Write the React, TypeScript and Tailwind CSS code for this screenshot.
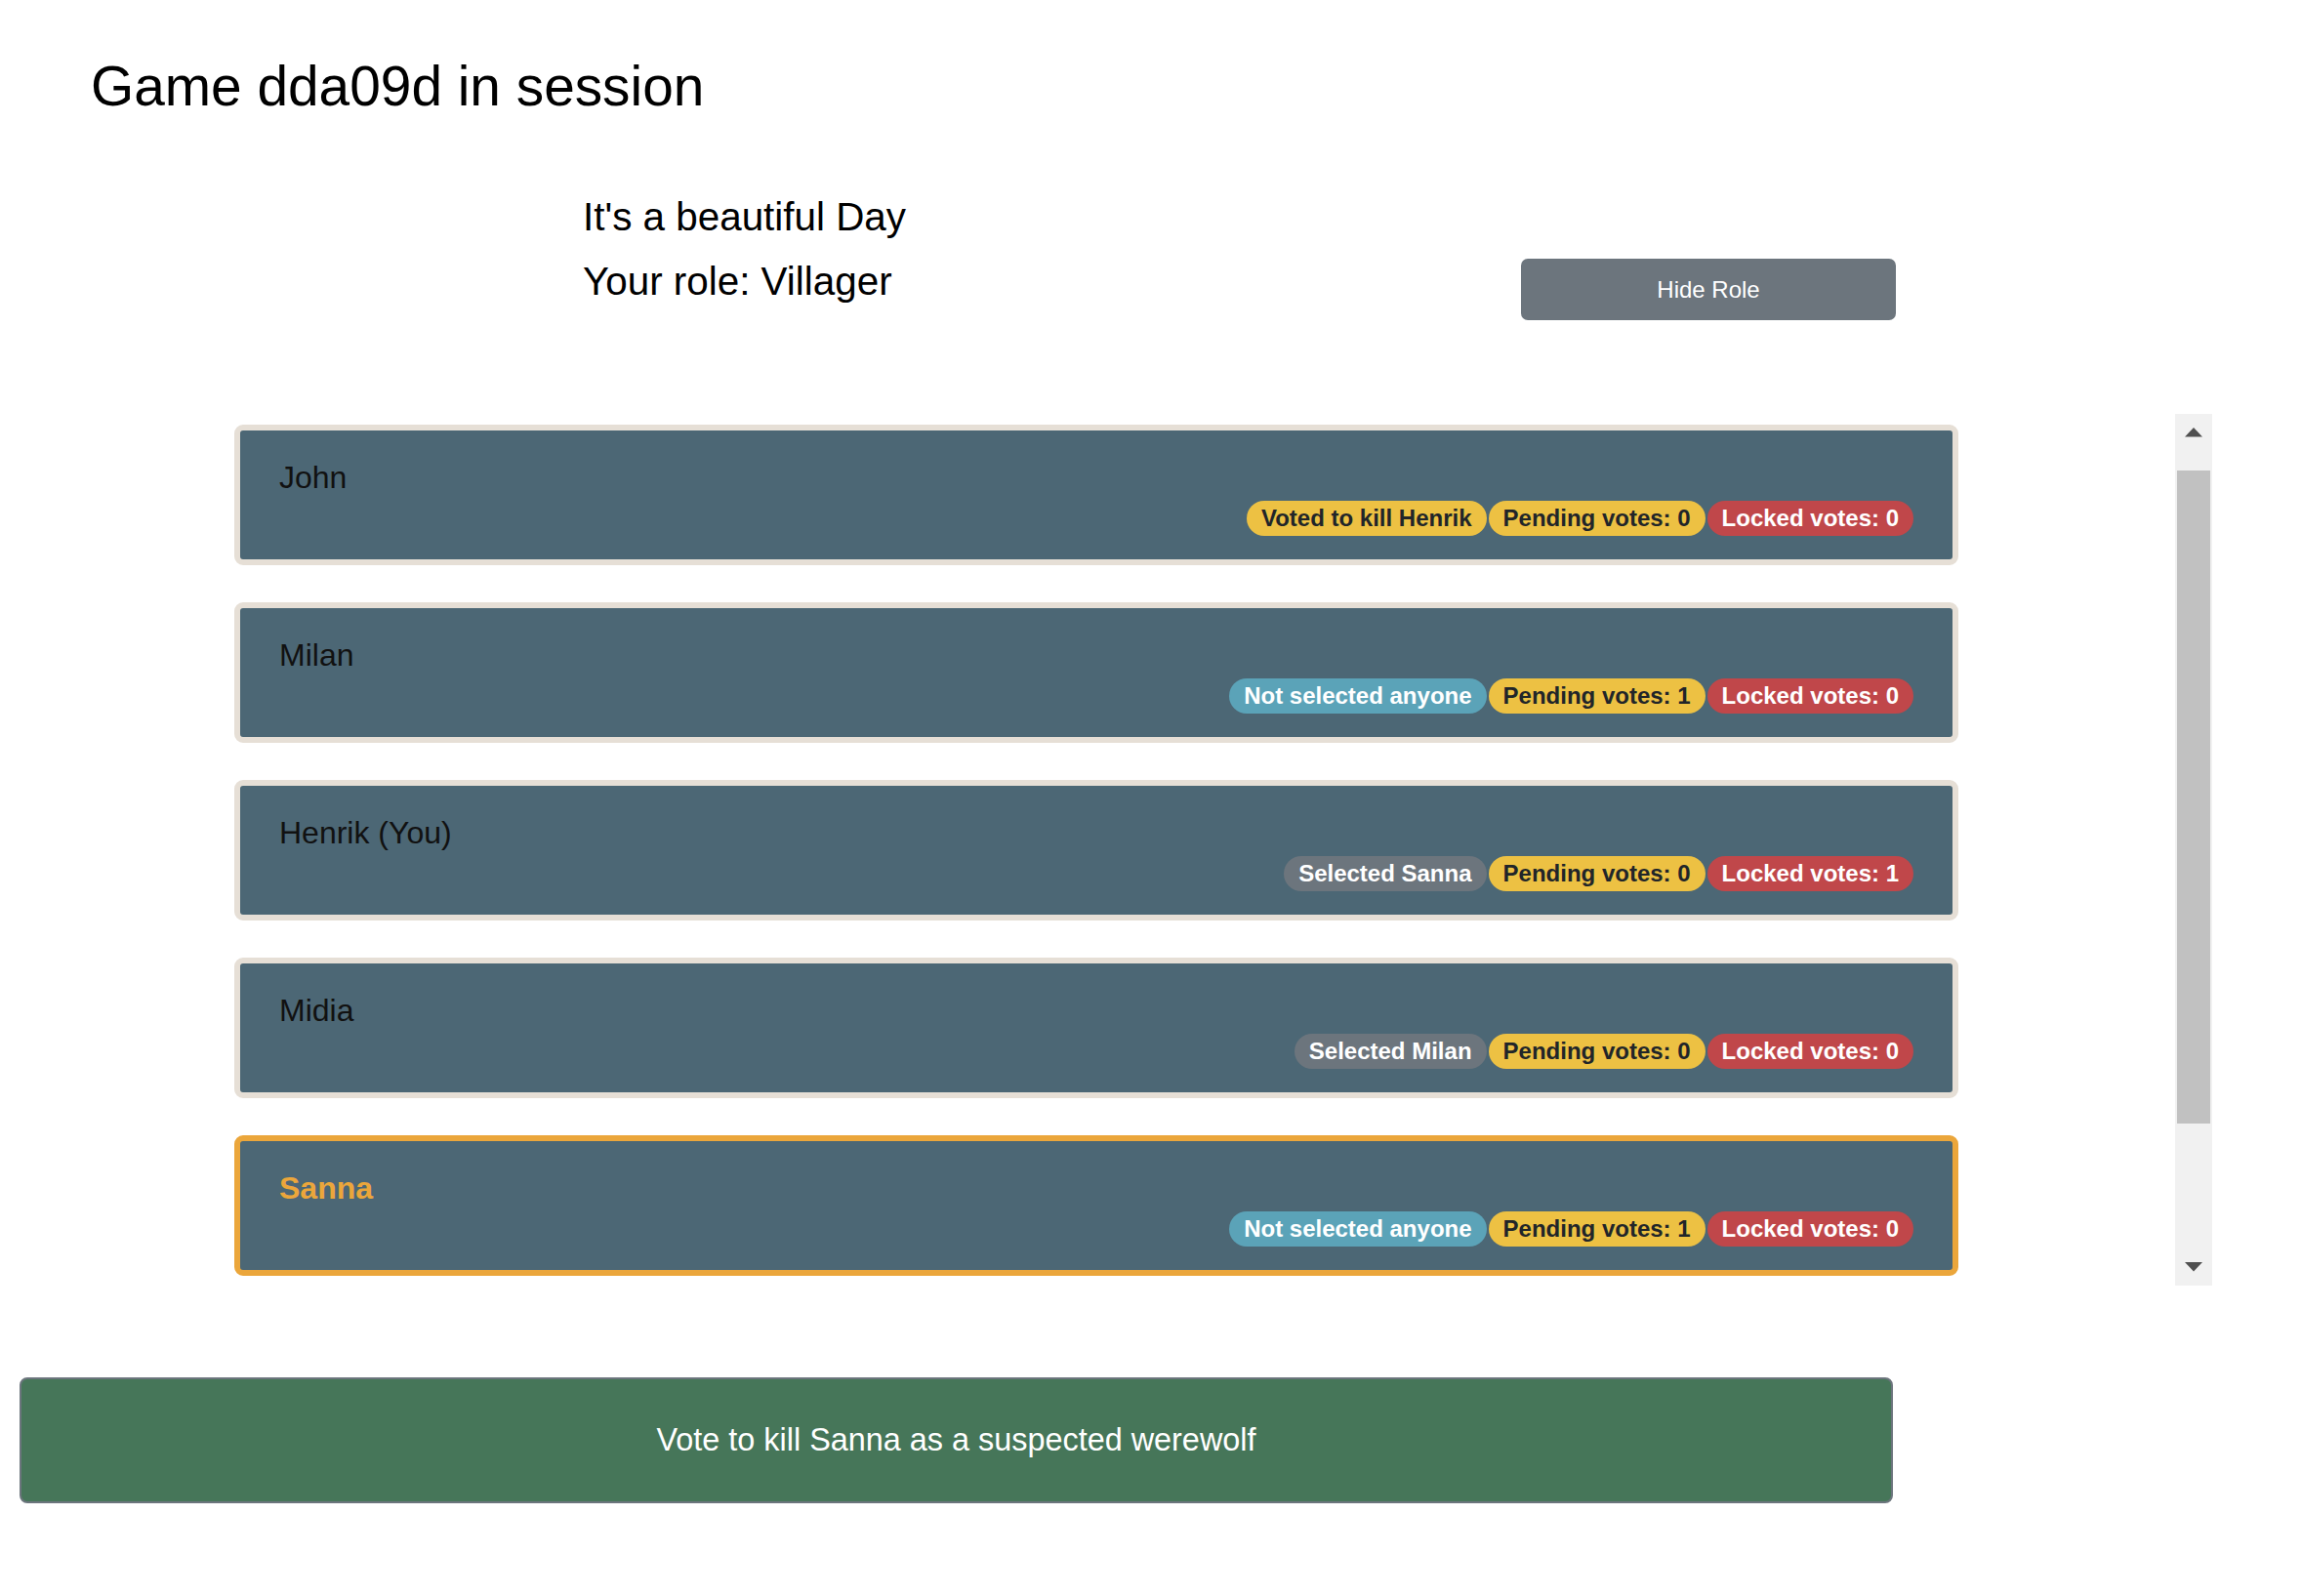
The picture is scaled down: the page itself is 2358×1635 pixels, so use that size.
import React from "react";

type Badge = { text: string; kind: "warning" | "danger" | "info" | "secondary" };
type Player = { name: string; selected?: boolean; badges: Badge[] };

const players: Player[] = [
  {
    name: "John",
    badges: [
      { text: "Voted to kill Henrik", kind: "warning" },
      { text: "Pending votes: 0", kind: "warning" },
      { text: "Locked votes: 0", kind: "danger" },
    ],
  },
  {
    name: "Milan",
    badges: [
      { text: "Not selected anyone", kind: "info" },
      { text: "Pending votes: 1", kind: "warning" },
      { text: "Locked votes: 0", kind: "danger" },
    ],
  },
  {
    name: "Henrik (You)",
    badges: [
      { text: "Selected Sanna", kind: "secondary" },
      { text: "Pending votes: 0", kind: "warning" },
      { text: "Locked votes: 1", kind: "danger" },
    ],
  },
  {
    name: "Midia",
    badges: [
      { text: "Selected Milan", kind: "secondary" },
      { text: "Pending votes: 0", kind: "warning" },
      { text: "Locked votes: 0", kind: "danger" },
    ],
  },
  {
    name: "Sanna",
    selected: true,
    badges: [
      { text: "Not selected anyone", kind: "info" },
      { text: "Pending votes: 1", kind: "warning" },
      { text: "Locked votes: 0", kind: "danger" },
    ],
  },
];

const badgeClass: Record<Badge["kind"], string> = {
  warning: "bg-[#edc143] text-[#212529]",
  danger: "bg-[#c0474a] text-white",
  info: "bg-[#5ba3b8] text-white",
  secondary: "bg-[#6c757d] text-white",
};

function PlayerCard({ p }: { p: Player }) {
  return (
    <div
      className={
        "h-[144px] rounded-[9px] border-[6px] bg-[#4c6775] px-[40px] py-[24px] " +
        (p.selected ? "border-[#eba63b]" : "border-[#e6dfd6]")
      }
    >
      <div
        className={
          "h-[48px] text-[32px] leading-[48px] " +
          (p.selected ? "font-bold text-[#eba63b]" : "text-[#111]")
        }
      >
        {p.name}
      </div>
      <div className="flex h-[36px] justify-end gap-[2px]">
        {p.badges.map((b, i) => (
          <span
            key={i}
            className={
              "flex h-[36px] items-center rounded-full px-[15px] text-[24px] font-bold leading-none " +
              badgeClass[b.kind]
            }
          >
            {b.text}
          </span>
        ))}
      </div>
    </div>
  );
}

function Scrollbar() {
  return (
    <div className="flex h-full w-[38px] flex-col bg-[#f1f1f1]">
      <div className="flex h-[38px] items-center justify-center">
        <svg width="18" height="10" viewBox="0 0 18 10">
          <polygon points="9,0 18,9.5 0,9.5" fill="#505050" />
        </svg>
      </div>
      <div className="flex-1 px-[2px]">
        <div className="mt-[20px] h-[669px] bg-[#c1c1c1]" />
      </div>
      <div className="flex h-[38px] items-center justify-center">
        <svg width="18" height="10" viewBox="0 0 18 10">
          <polygon points="0,0 18,0 9,9.5" fill="#505050" />
        </svg>
      </div>
    </div>
  );
}

export default function App() {
  return (
    <div
      className="min-h-screen w-full bg-white text-[#111]"
      style={{ fontFamily: '"Liberation Sans", Arial, sans-serif' }}
    >
      <h1 className="pl-[93px] pt-[55px] text-[56.8px] font-normal leading-[68px] text-black">
        Game dda09d in session
      </h1>

      <div className="mt-[66px] flex items-start">
        <div className="ml-[597px] w-[961px] text-[40.4px] leading-[66px] text-black">
          <div>It's a beautiful Day</div>
          <div>Your role: Villager</div>
        </div>
        <button className="mt-[76px] h-[63px] w-[384px] rounded-[7px] bg-[#6c757d] text-[24px] text-white">
          Hide Role
        </button>
      </div>

      <div className="mt-[96px] flex h-[893px] w-[2266px]">
        <div className="flex flex-1 flex-col gap-[38px] overflow-hidden pl-[240px] pr-[222px] pt-[11px]">
          {players.map((p) => (
            <PlayerCard key={p.name} p={p} />
          ))}
        </div>
        <Scrollbar />
      </div>

      <div className="mt-[94px] pl-[20px]">
        <button className="flex h-[129px] w-[1919px] items-center justify-center rounded-[8px] border-2 border-[#6c757d] bg-[#467659] text-[32.4px] text-white">
          Vote to kill Sanna as a suspected werewolf
        </button>
      </div>
    </div>
  );
}
